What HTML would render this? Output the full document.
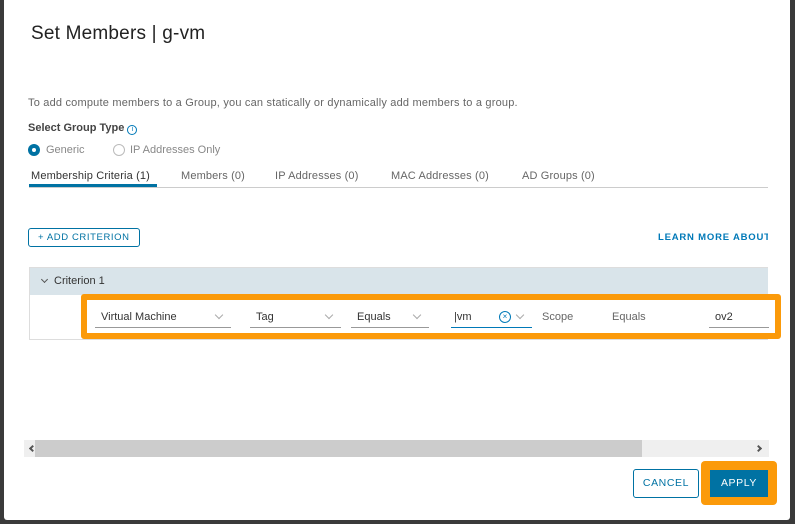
<!DOCTYPE html>
<html><head><style>
*{box-sizing:border-box;margin:0;padding:0}
body{width:795px;height:524px;background:#3a3a3a;font-family:"Liberation Sans",sans-serif;position:relative;overflow:hidden}
.m{position:absolute;left:4px;top:0;width:786px;height:520px;background:#fff;border-radius:0 0 3px 3px}
.a{position:absolute;white-space:nowrap}
.g{color:#666;font-size:11px}
.lbl{color:#333;font-size:11px}
.tab{position:absolute;top:170px;font-size:11px;color:#666;letter-spacing:.15px}
.sel{position:absolute;top:307px;height:21px;border-bottom:1px solid #999;font-size:11px;color:#333;padding:4px 0 0 6px}
.chev{position:absolute;right:9px;top:5px;width:6px;height:6px;border-right:1px solid #aaa;border-bottom:1px solid #aaa;transform:rotate(45deg)}
</style></head><body>
<div class="m">
<div class="a" style="left:27px;top:23px;font-size:19px;color:#222;letter-spacing:.2px">Set Members | g-vm</div>
<div class="a g" style="left:24px;top:97px;letter-spacing:.2px">To add compute members to a Group, you can statically or dynamically add members to a group.</div>
<div class="a lbl" style="left:24px;top:122px;font-weight:bold;color:#444">Select Group Type <span style="display:inline-block;width:10px;height:10px;border:1px solid #0079b8;border-radius:50%;font-size:7px;color:#0079b8;text-align:center;line-height:8px;font-weight:normal">i</span></div>
<div class="a" style="left:24px;top:144px;width:12px;height:12px;border-radius:50%;background:#0072a3"><div style="position:absolute;left:4px;top:4px;width:4px;height:4px;border-radius:50%;background:#fff"></div></div>
<div class="a g" style="left:42px;top:144px;color:#888">Generic</div>
<div class="a" style="left:109px;top:144px;width:12px;height:12px;border-radius:50%;border:1px solid #bbb"></div>
<div class="a g" style="left:126px;top:144px;color:#888">IP Addresses Only</div>
<div class="tab" style="left:27px;color:#333">Membership Criteria (1)</div>
<div class="a" style="left:25px;top:184px;width:128px;height:3px;background:#0072a3"></div>
<div class="tab" style="left:177px">Members (0)</div>
<div class="tab" style="left:271px">IP Addresses (0)</div>
<div class="tab" style="left:387px">MAC Addresses (0)</div>
<div class="tab" style="left:518px">AD Groups (0)</div>
<div class="a" style="left:25px;top:187px;width:739px;height:1px;background:#ccc"></div>
<div class="a" style="left:24px;top:228px;width:112px;height:19px;border:1px solid #0072a3;border-radius:3px;color:#0072a3;font-size:9.5px;letter-spacing:.6px;padding:3px 0 0 9px">+ ADD CRITERION</div>
<div class="a" style="left:654px;top:232px;color:#0079b8;font-size:9.5px;letter-spacing:.8px;font-weight:bold;width:110px;overflow:hidden">LEARN MORE ABOUT M</div>
<div class="a" style="left:25px;top:267px;width:739px;height:73px;border:1px solid #ddd;border-right:none"></div>
<div class="a" style="left:26px;top:268px;width:738px;height:27px;background:#d9e4ea"></div>
<div class="a" style="left:38px;top:277px;width:5px;height:5px;border-right:1px solid #555;border-bottom:1px solid #555;transform:rotate(45deg)"></div>
<div class="a lbl" style="left:50px;top:275px">Criterion 1</div>
<div class="a" style="left:77px;top:294px;width:700px;height:45px;border:6px solid #fb9a0a;border-radius:3px;background:#fff"></div>
<div class="sel" style="left:91px;width:136px">Virtual Machine<span class="chev"></span></div>
<div class="sel" style="left:246px;width:91px">Tag<span class="chev"></span></div>
<div class="sel" style="left:347px;width:78px">Equals<span class="chev"></span></div>
<div class="sel" style="left:447px;width:81px;border-bottom:1px solid #0079b8;padding-left:3px">|vm<span style="position:absolute;left:48px;top:4px;width:12px;height:12px;border:1px solid #0079b8;border-radius:50%;font-size:8px;color:#0079b8;text-align:center;line-height:10px">×</span><span class="chev"></span></div>
<div class="a g" style="left:538px;top:311px">Scope</div>
<div class="a g" style="left:608px;top:311px">Equals</div>
<div class="sel" style="left:705px;width:60px;padding-left:6px">ov2</div>
<div class="a" style="left:20px;top:440px;width:745px;height:17px;background:#efefef"></div>
<div class="a" style="left:31px;top:440px;width:607px;height:17px;background:#ccc"></div>
<div class="a" style="left:26px;top:446px;width:5px;height:5px;border-left:2px solid #555;border-bottom:2px solid #555;transform:rotate(45deg)"></div>
<div class="a" style="left:752px;top:446px;width:5px;height:5px;border-right:2px solid #555;border-top:2px solid #555;transform:rotate(45deg)"></div>
<div class="a" style="left:629px;top:469px;width:66px;height:29px;border:1px solid #0072a3;border-radius:3px;color:#0072a3;font-size:10.5px;letter-spacing:.6px;text-align:center;line-height:27px">CANCEL</div>
<div class="a" style="left:697px;top:461px;width:76px;height:44px;background:#fb9a0a;border-radius:4px"></div>
<div class="a" style="left:706px;top:470px;width:58px;height:27px;background:#0072a3;color:#fff;font-size:10.5px;letter-spacing:.6px;text-align:center;line-height:27px">APPLY</div>
</div>
</body></html>
